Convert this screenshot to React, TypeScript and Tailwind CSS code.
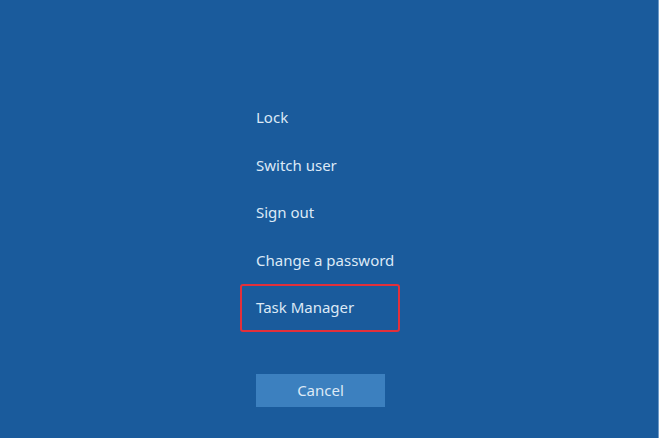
const ITEMS = ['Lock', 'Switch user', 'Sign out', 'Change a password'];

export default function App() {
  return (
    <div
      className="w-[659px] h-[438px] bg-[#1a5b9c] text-[#dce9f6] overflow-hidden border-r border-[#6f9bc8]"
      style={{ fontFamily: '"Noto Sans", "Open Sans", sans-serif' }}
    >
      <div className="flex flex-col pl-[256px] pt-[94px]">
        {ITEMS.map((label) => (
          <div key={label} className="h-[47.5px] flex items-center text-[15px] leading-none">
            {label}
          </div>
        ))}

        {/* highlighted entry */}
        <div className="relative h-[47.5px] flex items-center text-[15px] leading-none">
          Task Manager
          <div className="absolute -left-4 top-0 w-[160px] h-[48px] border-[2.5px] border-[#e3303a] rounded-[3px]" />
        </div>

        <button className="mt-[42px] w-[129px] h-[33px] bg-[#3c80bf] text-[15px] text-[#dce9f6]">
          Cancel
        </button>
      </div>
    </div>
  );
}
